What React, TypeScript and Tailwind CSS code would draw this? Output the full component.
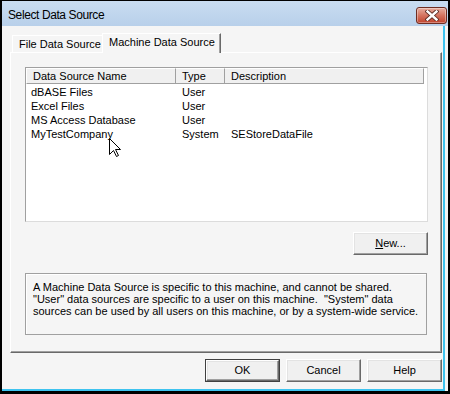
import React from "react";

const FONT = { fontFamily: '"Liberation Sans", Arial, sans-serif' };

const rows = [
  { name: "dBASE Files", type: "User", desc: "" },
  { name: "Excel Files", type: "User", desc: "" },
  { name: "MS Access Database", type: "User", desc: "" },
  { name: "MyTestCompany", type: "System", desc: "SEStoreDataFile" },
];

// classic 3D push button
function Button({ children, isDefault = false }: { children: React.ReactNode; isDefault?: boolean }) {
  const face = (
    <div className="flex h-full w-full items-center justify-center border border-t-white border-l-white border-r-[#696969] border-b-[#696969] bg-[#f0f0f0] shadow-[inset_-1px_-1px_0_#a0a0a0,inset_1px_1px_0_#e3e3e3] text-[11px] text-black">
      {children}
    </div>
  );
  if (isDefault) {
    return <div className="h-[23px] w-[75px] border border-[#404040]">{face}</div>;
  }
  return <div className="h-[23px] w-[75px]">{face}</div>;
}

function CloseGlyph() {
  return (
    <svg width="14" height="11" viewBox="0 0 14 11">
      <path d="M2.5 1.5 L11.5 9.5 M11.5 1.5 L2.5 9.5" stroke="#5a2a22" strokeWidth="4.2" strokeLinecap="square" />
      <path d="M2.5 1.5 L11.5 9.5 M11.5 1.5 L2.5 9.5" stroke="#ffffff" strokeWidth="2.4" strokeLinecap="square" />
    </svg>
  );
}

function Cursor() {
  return (
    <svg width="13" height="20" viewBox="0 0 13 20" className="absolute left-[107px] top-[137px]">
      <path
        d="M0.5 0.5 L0.5 16.5 L4.5 12.5 L7.5 18.5 L9.5 17.5 L6.5 11.5 L11.5 11.5 Z"
        fill="#ffffff"
        stroke="#000000"
        strokeWidth="1"
        strokeLinejoin="miter"
      />
    </svg>
  );
}

export default function App() {
  return (
    <div
      style={FONT}
      className="relative flex h-[394px] w-[450px] flex-col overflow-hidden border-t border-l-2 border-r-2 border-b-[3px] border-black bg-[#f5f5f5] text-black"
    >
      {/* Title bar */}
      <div className="flex h-[25px] items-center justify-between bg-gradient-to-b from-[#c9dcf1] to-[#b8d0ea] pl-[6px] pr-[1px]">
        <span className="pt-[2px] text-[12px] tracking-[-0.4px] text-black">Select Data Source</span>
        <div className="mt-[4px] flex h-[17px] w-[31px] items-center justify-center rounded-[3px] border border-[#6e2d22] bg-gradient-to-b from-[#e6ad9f] via-[#d4735f] to-[#c0412b] shadow-[inset_0_0_0_1px_rgba(255,255,255,0.35)]">
          <CloseGlyph />
        </div>
      </div>

      {/* Client area */}
      <div className="mr-[3px] flex flex-1 flex-col border-r-2 border-b-2 border-[#3ec3ef] pt-[7px] pl-[8px]">
        {/* Tabs */}
        <div className="relative z-10 ml-[2px] flex h-[19px] items-end">
          <div className="flex h-[17px] w-[90px] items-center border-t border-l border-white pl-[6px] text-[11px]">
            File Data Source
          </div>
          <div className="-mb-px flex h-[20px] w-[119px] items-center border-t border-l border-r border-t-white border-l-white border-r-[#696969] bg-[#f5f5f5] pl-[6px] pb-[2px] text-[11px] shadow-[inset_-1px_0_0_#a0a0a0]">
            Machine Data Source
          </div>
        </div>

        {/* Tab panel */}
        <div className="flex h-[301px] w-[432px] flex-col border border-t-white border-l-white border-r-[#696969] border-b-[#696969] px-[14px] pt-[14px] shadow-[inset_-1px_-1px_0_#a0a0a0]">
          {/* List view */}
          <div className="h-[155px] w-[403px] border border-t-[#a0a0a0] border-l-[#a0a0a0] border-r-[#dcdcdc] border-b-[#dcdcdc] bg-white text-[11px]">
            <div className="flex h-[16px]">
              <div className="flex w-[150px] items-center border-t border-l border-r border-b border-t-white border-l-white border-r-[#a0a0a0] border-b-[#a0a0a0] bg-[#f0f0f0] pt-[1px] pl-[6px]">
                Data Source Name
              </div>
              <div className="flex w-[49px] items-center border-t border-r border-b border-t-white border-r-[#a0a0a0] border-b-[#a0a0a0] bg-[#f0f0f0] pt-[1px] pl-[6px]">
                Type
              </div>
              <div className="flex w-[199px] items-center border-t border-r border-b border-t-white border-r-[#a0a0a0] border-b-[#a0a0a0] bg-[#f0f0f0] pt-[1px] pl-[6px]">
                Description
              </div>
            </div>
            {rows.map((r) => (
              <div key={r.name} className="flex h-[14px] items-center pt-[1px] leading-[14px]">
                <div className="w-[150px] pl-[5px]">{r.name}</div>
                <div className="w-[49px] pl-[6px]">{r.type}</div>
                <div className="w-[199px] pl-[6px]">{r.desc}</div>
              </div>
            ))}
          </div>

          {/* New button */}
          <div className="mt-[10px] flex w-[403px] justify-end">
            <div className="h-[22px]">
              <Button>
                <span>
                  <span className="underline">N</span>ew...
                </span>
              </Button>
            </div>
          </div>

          {/* Description frame */}
          <div className="mt-[19px] h-[62px] w-[402px] border border-[#a0a0a0] pl-[7px] pt-[7px] text-[11px] leading-[12px] shadow-[inset_1px_1px_0_#ffffff]">
            <p>A Machine Data Source is specific to this machine, and cannot be shared.</p>
            <p>"User" data sources are specific to a user on this machine.&nbsp; "System" data</p>
            <p>sources can be used by all users on this machine, or by a system-wide service.</p>
          </div>
        </div>

        {/* Dialog buttons */}
        <div className="mt-[6px] flex w-[432px] justify-end gap-[6px]">
          <Button isDefault>OK</Button>
          <Button>Cancel</Button>
          <Button>Help</Button>
        </div>
      </div>

      <Cursor />
    </div>
  );
}
